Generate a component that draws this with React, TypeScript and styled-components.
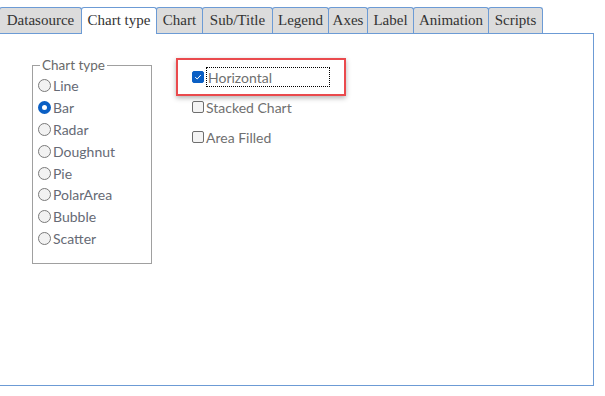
import React from "react";
import styled, { createGlobalStyle } from "styled-components";

const GlobalStyle = createGlobalStyle`
  html, body {
    margin: 0;
    padding: 0;
    background: #ffffff;
    width: 605px;
    height: 396px;
    overflow: hidden;
  }
`;

const Page = styled.div`
  width: 605px;
  height: 396px;
  margin-left: -1px;
  font-family: "Lato", "Liberation Sans", sans-serif;
`;

const TabBar = styled.div`
  display: flex;
  align-items: flex-start;
  padding-top: 7px;
  height: 33px;
  box-sizing: border-box;
  position: relative;
  z-index: 1;
`;

const Tab = styled.div<{ $active?: boolean; $w: number }>`
  display: flex;
  align-items: center;
  justify-content: center;
  box-sizing: border-box;
  height: ${(p) => (p.$active ? "27px" : "26px")};
  width: ${(p) => p.$w}px;
  margin-right: -1px;
  border: 1px solid #6c9bd5;
  border-bottom: none;
  border-radius: 3px 3px 0 0;
  background: ${(p) => (p.$active ? "#ffffff" : "#dcdcdc")};
  font-family: "Liberation Serif", serif;
  font-size: 15px;
  color: #333333;
  padding-bottom: ${(p) => (p.$active ? "1px" : "0")};
`;

const Panel = styled.div`
  width: 595px;
  height: 353px;
  box-sizing: border-box;
  border: 1px solid #6c9bd5;
  display: flex;
  align-items: flex-start;
  padding: 23px 0 0 32px;
`;

const Group = styled.fieldset`
  margin: 0;
  width: 120px;
  height: 207px;
  box-sizing: border-box;
  border: 1px solid #a0a0a0;
  padding: 2px 0 0 5px;
  display: flex;
  flex-direction: column;
`;

const GroupTitle = styled.legend`
  padding: 0 2px;
  margin-left: 2px;
  font-size: 13.5px;
  color: #6a6a6a;
  line-height: 16px;
`;

const OptionRow = styled.label`
  display: flex;
  align-items: center;
  height: 21.8px;
  font-size: 14px;
  color: #666a75;
`;

const RadioDot = styled.span<{ $on?: boolean }>`
  width: 13px;
  height: 13px;
  box-sizing: border-box;
  border-radius: 50%;
  margin-right: 2px;
  border: ${(p) => (p.$on ? "4px solid #0a5fc4" : "1px solid #7a7a7a")};
  background: ${(p) => (p.$on ? "#ffffff" : "#f2f2f2")};
`;

const Options = styled.div`
  display: flex;
  flex-direction: column;
  margin-left: 24px;
  margin-top: 1px;
`;

const Highlight = styled.div`
  display: flex;
  align-items: center;
  width: 170px;
  height: 38px;
  box-sizing: border-box;
  border: 2px solid #ea4a4d;
  box-shadow: 0 2px 5px rgba(0, 0, 0, 0.3);
  padding-left: 14px;
  margin-bottom: -4px;
`;

const CheckRow = styled.label`
  display: flex;
  align-items: center;
  height: 30px;
  padding-left: 16px;
  font-size: 14px;
  color: #707070;
`;

const Box = styled.span<{ $on?: boolean }>`
  width: 12px;
  height: 12px;
  box-sizing: border-box;
  border-radius: 2px;
  margin-right: 2px;
  display: flex;
  align-items: center;
  justify-content: center;
  border: 1px solid ${(p) => (p.$on ? "#0a5fc4" : "#6e6e6e")};
  background: ${(p) => (p.$on ? "#0a5fc4" : "#f4f4f4")};
`;

const FocusText = styled.span`
  display: flex;
  align-items: center;
  width: 124px;
  height: 20px;
  box-sizing: border-box;
  border: 1px dotted #000;
  padding-left: 1px;
  font-size: 14px;
  color: #707070;
`;

const tabs = [
  { name: "Datasource", w: 83 },
  { name: "Chart type", w: 76 },
  { name: "Chart", w: 47 },
  { name: "Sub/Title", w: 71 },
  { name: "Legend", w: 57 },
  { name: "Axes", w: 40 },
  { name: "Label", w: 47 },
  { name: "Animation", w: 76 },
  { name: "Scripts", w: 55 },
];

const types = ["Line", "Bar", "Radar", "Doughnut", "Pie", "PolarArea", "Bubble", "Scatter"];

const Check = () => (
  <svg width="8" height="8" viewBox="0 0 8 8">
    <path d="M1.2 4.2 L3.2 6 L6.8 2" fill="none" stroke="#fff" strokeWidth="1" />
  </svg>
);

const App = () => {
  return (
    <Page>
      <GlobalStyle />
      <TabBar>
        {tabs.map((t) => (
          <Tab key={t.name} $w={t.w} $active={t.name === "Chart type"}>
            {t.name}
          </Tab>
        ))}
      </TabBar>
      <Panel>
        <Group>
          <GroupTitle>Chart type</GroupTitle>
          {types.map((t) => (
            <OptionRow key={t}>
              <RadioDot $on={t === "Bar"} />
              {t}
            </OptionRow>
          ))}
        </Group>
        <Options>
          <Highlight>
            <Box $on>
              <Check />
            </Box>
            <FocusText>Horizontal</FocusText>
          </Highlight>
          <CheckRow>
            <Box />
            Stacked Chart
          </CheckRow>
          <CheckRow>
            <Box />
            Area Filled
          </CheckRow>
        </Options>
      </Panel>
    </Page>
  );
};

export default App;
